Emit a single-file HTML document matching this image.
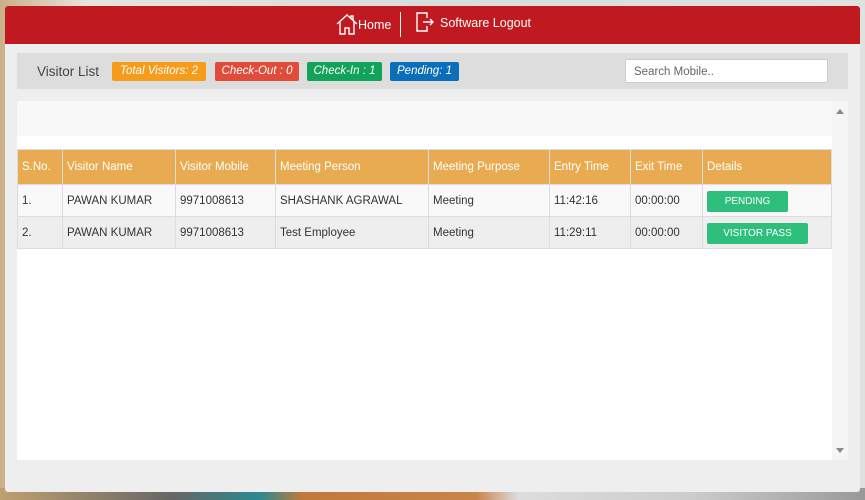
<!DOCTYPE html>
<html><head><style>
body{margin:0;width:865px;height:500px;overflow:hidden;font-family:"Liberation Sans",sans-serif;background:linear-gradient(90deg,#c9b089 0%,#e8e4dc 10%,#d8dcdc 50%,#e0e2e0 100%);position:relative}
.bot{position:absolute;left:0;top:488px;width:865px;height:12px;background:linear-gradient(90deg,#bfa070 0,#666 20%,#2a8a90 30%,#c07a3a 35%,#c8844a 55%,#ddd 60%,#ccc 80%,#999 100%)}
.modal{position:absolute;left:5px;top:6px;width:855px;height:486px;background:#eeeeee;border-radius:3px;overflow:hidden}
.hdr{height:38px;background:#c0191f;color:#fff;font-size:12.5px;position:relative}
.hdr .home{position:absolute;left:331px;top:7px}
.hdr .sep{position:absolute;left:395px;top:6px;width:1px;height:25px;background:#fff}
.hdr .lo{position:absolute;left:411px;top:6px}
.tb{position:absolute;left:12px;top:47px;width:831px;height:36px;background:#dddddd}
.tb .t{position:absolute;left:20px;top:11px;font-size:13.5px;color:#444}
.b{position:absolute;top:9px;height:19px;line-height:19px;color:#fff;font-size:11.5px;font-style:italic;border-radius:2px;text-align:center}
.srch{position:absolute;left:608px;top:6px;height:24px;background:#fff;border:1px solid #ccc;border-radius:2px;font-size:11.5px;color:#666;line-height:24px;padding-left:8px;box-sizing:border-box;width:203px}
.cont{position:absolute;left:12px;top:95px;width:831px;height:359px;background:#fff}
.strip{position:absolute;left:0;top:0;width:815px;height:35px;background:#f8f8f8}
.sb{position:absolute;right:0;top:0;width:16px;height:359px;background:#f5f5f5}
table{position:absolute;left:0;top:48px;border-collapse:collapse;font-size:11.5px;width:815px;table-layout:fixed}
th{background:#e8ab51;color:#fff;font-weight:normal;text-align:left;height:34px;padding:0 4px;border:1px solid #ddd;white-space:nowrap;overflow:hidden}
td{height:31px;padding:0 4px;color:#333;border:1px solid #ddd;white-space:nowrap;overflow:hidden}
tr.a td{background:#f9f9f9} tr.c td{background:#eeeeee}
.g{display:inline-block;background:#2fbf7c;color:#fff;font-size:10px;height:21px;line-height:21px;text-align:center;border-radius:2px;margin-top:2px}
</style></head><body>
<div class="bot"></div>
<div class="modal">
<div class="hdr">
<span class="home"><svg width="22" height="22" viewBox="0 0 22 22" style="vertical-align:-6px" fill="none" stroke="#fff" stroke-width="1.4"><path d="M1 11 L11 2 L21 11 M4 9 V21 H9 V15 H13 V21 H18 V9 M15 5 V3 H17 V7"/></svg>Home</span>
<span class="sep"></span>
<span class="lo"><svg width="18" height="20" viewBox="0 0 18 20" style="vertical-align:-5px;margin-right:6px" fill="none" stroke="#fff" stroke-width="1.4"><path d="M11 6 V1 H1 V19 H11 V14 M7 10 H17 M14 7 L17 10 L14 13"/></svg>Software Logout</span>
</div>
<div class="tb">
<span class="t">Visitor List</span>
<span class="b" style="left:95px;width:94px;background:#f59c1a">Total Visitors: 2</span>
<span class="b" style="left:198px;width:84px;background:#e04b3a">Check-Out : 0</span>
<span class="b" style="left:290px;width:75px;background:#12a35a">Check-In : 1</span>
<span class="b" style="left:373px;width:69px;background:#0a6fb8">Pending: 1</span>
<div class="srch">Search Mobile..</div>
</div>
<div class="cont">
<div class="strip"></div>
<div class="sb"><div style="position:absolute;left:4px;top:8px;border:4px solid transparent;border-bottom:5px solid #888;border-top:0"></div><div style="position:absolute;left:4px;top:347px;border:4px solid transparent;border-top:5px solid #888;border-bottom:0"></div></div>
<table>
<colgroup><col style="width:45px"><col style="width:113px"><col style="width:100px"><col style="width:153px"><col style="width:121px"><col style="width:81px"><col style="width:72px"><col></colgroup>
<tr><th>S.No.</th><th>Visitor Name</th><th>Visitor Mobile</th><th>Meeting Person</th><th>Meeting Purpose</th><th>Entry Time</th><th>Exit Time</th><th>Details</th></tr>
<tr class="a"><td>1.</td><td>PAWAN KUMAR</td><td>9971008613</td><td>SHASHANK AGRAWAL</td><td>Meeting</td><td>11:42:16</td><td>00:00:00</td><td><span class="g" style="width:81px">PENDING</span></td></tr>
<tr class="c"><td>2.</td><td>PAWAN KUMAR</td><td>9971008613</td><td>Test Employee</td><td>Meeting</td><td>11:29:11</td><td>00:00:00</td><td><span class="g" style="width:101px">VISITOR PASS</span></td></tr>
</table>
</div>
</div>
</body></html>
